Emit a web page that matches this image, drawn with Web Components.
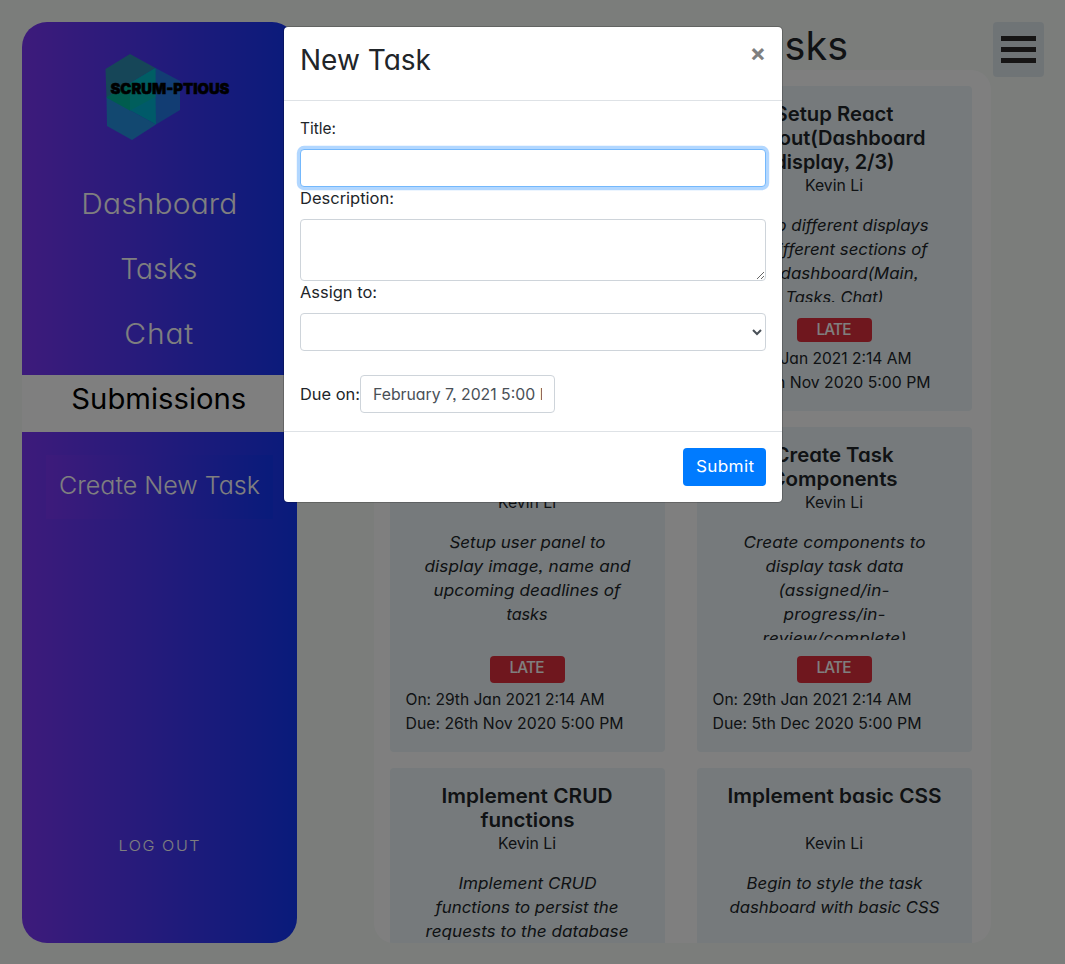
<!DOCTYPE html>
<html lang="en">
<head>
<meta charset="utf-8">
<title>Scrum-ptious</title>
<style>
html,body{height:100%}
body{margin:0;overflow:hidden;background:#f6faf7;color:#212529;font:16px/24px Inter,"Open Sans",sans-serif;font-feature-settings:"cv11","ss03"}
</style>
</head>
<body>
<scrum-app></scrum-app>
<script>
const define=(name,html,init)=>{
  const t=document.createElement('template');t.innerHTML=html;
  customElements.define(name,class extends HTMLElement{
    connectedCallback(){
      if(this.shadowRoot)return;
      this.attachShadow({mode:'open'}).append(t.content.cloneNode(true));
      if(init)init.call(this,this.shadowRoot);
    }
  });
};

/* One line of text set to the width given in its "w" attribute: glyphs widen a little, tracking takes the rest */
define('text-line',`<style>
:host{display:block;white-space:nowrap;flex:none}
span{display:inline-block;transform-origin:0 50%}
</style><span><slot></slot></span>`,function(r){
  const s=r.querySelector('span'),w=+this.getAttribute('w'),n=this.textContent.length;
  if(!w)return;
  const natural=s.getBoundingClientRect().width;
  const k=Math.min(1.07,Math.max(.96,w/natural));
  s.style.letterSpacing=((w/k-natural)/(n-1)).toFixed(3)+'px';
  s.style.transform='translate(var(--nudge,0px),var(--drop,0px)) scaleX('+k.toFixed(4)+')';
  this.style.width=w+'px';
});

define('brand-logo',`<style>:host{display:block;width:140px;height:98px}svg{display:block}</style>
<svg width="140" height="98" viewBox="98 48 140 98">
<path d="M105.500 69 130 54 155.500 68 130 83 106.500 97.500Z" fill="#2c8cb0"/>
<path d="M106.500 97.500 156 124.500 132 140 107 126Z" fill="#2490e0"/>
<path d="M155.500 68 180 81V110L156 124.500Z" fill="#247ae6"/>
<path d="M155.500 68 156 124.500 106.500 97.500Z" fill="#00b4d2"/>
<path d="M155.500 68V96L130 110.500V83Z" fill="#00bcc8"/>
<path d="M106.500 97.500 130 83 156 96.500 130 110.500Z" fill="#00bcb8"/>
<path d="M106.500 97.500 130 83V110.500Z" fill="#00b89c"/>
<text x="110.500" y="93.500" font-family="Inter,sans-serif" font-weight="900" font-size="15" textLength="119" lengthAdjust="spacingAndGlyphs" fill="#000" stroke="#000" stroke-width=".5">SCRUM-PTIOUS</text>
</svg>`);

define('nav-item',`<style>
:host{--nudge:-.7px;display:flex;justify-content:center;height:57px;margin-bottom:8px;font-size:28px;line-height:48px;color:#fff;font-weight:350}
:host([active]){background:#fff;color:#000;font-weight:400}
</style><slot></slot>`);

define('side-bar',`<style>
:host{display:flex;flex-direction:column;width:275px;height:921px;border-radius:25px;background:linear-gradient(90deg,#7b37f7,#1236f6);overflow:hidden;flex:none}
brand-logo{margin:26px 0 34px 76px}
.create{--drop:-1px;display:flex;justify-content:center;align-items:center;width:227px;height:64px;margin:15px 0 0 24px;background:linear-gradient(90deg,#7b37f7,#1236f6);color:#fff;font-size:24px;font-weight:350}
.out{--drop:-1px;--nudge:-.5px;display:flex;justify-content:center;margin-top:auto;margin-bottom:84px;color:#fff;font-size:15px;font-weight:350}
</style>
<brand-logo></brand-logo>
<nav>
<nav-item><text-line w="156">Dashboard</text-line></nav-item>
<nav-item><text-line w="77">Tasks</text-line></nav-item>
<nav-item><text-line w="69">Chat</text-line></nav-item>
<nav-item active><text-line w="175">Submissions</text-line></nav-item>
</nav>
<div class="create"><text-line w="201">Create New Task</text-line></div>
<div class="out"><text-line w="81">LOG OUT</text-line></div>`);

define('task-card',`<style>
:host{--nudge:-.5px;display:flex;flex-direction:column;align-items:center;box-sizing:border-box;width:275px;height:325px;padding:16px 15px;background:#ecf5f8;border-radius:4px}
.title,.desc{display:flex;flex-direction:column;align-items:center}
.title{min-height:48px;font-size:20px;font-weight:600}
.desc{margin-top:15px;height:110px;overflow:hidden;font-style:italic;align-self:stretch;flex:none}
.who{--drop:-1px;--nudge:-1px;height:24px}
:host([tall]) .desc{height:89px}
.badge{--drop:-1px;margin-top:16px;width:75px;height:27px;flex:none;border-radius:4px;background:#df2f3c;color:#fff;display:flex;justify-content:center;font-weight:550}
:host([tall]) .badge{height:24px}
.dates{align-self:stretch;margin:4px 0 0 .5px}
</style>
<div class="title"><slot name="title"></slot></div>
<div class="who"><text-line w="58">Kevin Li</text-line></div>
<div class="desc"><slot name="desc"></slot></div>
<div class="badge"><text-line w="35">LATE</text-line></div>
<div class="dates"><slot name="date"></slot></div>`);

define('menu-button',`<style>
:host{display:flex;flex-direction:column;gap:6px;box-sizing:border-box;width:51px;height:55px;padding:14px 8px;border-radius:4px;background:#dfe9ed;flex:none}
i{display:block;height:5px;background:#2c2a2a}
</style><i></i><i></i><i></i>`);

define('task-board',`<style>
:host{display:block;width:617px;flex:none}
h1{margin:0;height:48px;display:flex;justify-content:flex-end;padding-right:143.500px;font-size:40px;line-height:48px;font-weight:400}
.panel{box-sizing:border-box;height:873px;padding:16px;border-radius:20px;background:#fff;display:grid;grid-template-columns:275px 275px;gap:16px 32px;align-content:start;overflow:hidden}
</style>
<h1><text-line w="110">Tasks</text-line></h1>
<div class="panel">
<task-card></task-card>
<task-card tall>
<text-line slot="title" w="119">Setup React</text-line><text-line slot="title" w="182">Layout(Dashboard</text-line><text-line slot="title" w="120">display, 2/3)</text-line>
<text-line slot="desc" w="188">Setup different displays</text-line><text-line slot="desc" w="186">for different sections of</text-line><text-line slot="desc" w="168">the dashboard(Main,</text-line><text-line slot="desc" w="98">Tasks, Chat)</text-line>
<text-line slot="date" w="199">On: 29th Jan 2021 2:14 AM</text-line><text-line slot="date" w="218">Due: 26th Nov 2020 5:00 PM</text-line>
</task-card>
<task-card>
<text-line slot="desc" w="156">Setup user panel to</text-line><text-line slot="desc" w="206">display image, name and</text-line><text-line slot="desc" w="187">upcoming deadlines of</text-line><text-line slot="desc" w="41">tasks</text-line>
<text-line slot="date" w="199">On: 29th Jan 2021 2:14 AM</text-line><text-line slot="date" w="218">Due: 26th Nov 2020 5:00 PM</text-line>
</task-card>
<task-card>
<text-line slot="title" w="119">Create Task</text-line><text-line slot="title" w="127">Components</text-line>
<text-line slot="desc" w="182">Create components to</text-line><text-line slot="desc" w="138">display task data</text-line><text-line slot="desc" w="111">(assigned/in-</text-line><text-line slot="desc" w="102">progress/in-</text-line><text-line slot="desc" w="144">review/complete)</text-line>
<text-line slot="date" w="199">On: 29th Jan 2021 2:14 AM</text-line><text-line slot="date" w="209">Due: 5th Dec 2020 5:00 PM</text-line>
</task-card>
<task-card>
<text-line slot="title" w="171">Implement CRUD</text-line><text-line slot="title" w="94">functions</text-line>
<text-line slot="desc" w="138">Implement CRUD</text-line><text-line slot="desc" w="183">functions to persist the</text-line><text-line slot="desc" w="203">requests to the database</text-line>
</task-card>
<task-card>
<text-line slot="title" w="214">Implement basic CSS</text-line>
<text-line slot="desc" w="176">Begin to style the task</text-line><text-line slot="desc" w="210">dashboard with basic CSS</text-line>
</task-card>
</div>`);

define('new-task-modal',`<style>
:host{display:block;box-sizing:border-box;width:500px;height:477px;background:#fff;background-clip:padding-box;border:1px solid rgba(0,0,0,.2);border-radius:5px}
header{box-sizing:border-box;height:74px;padding:12px 16px;border-bottom:1px solid #dee2e6;display:flex;justify-content:space-between}
h2{margin:0;font-size:28px;line-height:42px;font-weight:400}
.close{font-size:24px;line-height:28px;font-weight:700;color:#7f7f7f}
main{box-sizing:border-box;height:330px;padding:16px}
label{--drop:-1px;display:block;height:24px}
input,textarea,select{display:block;box-sizing:border-box;width:466px;height:38px;margin:0;padding:6px 12px;border:1px solid #ced4da;border-radius:4px;background:#fff;color:#495057;font:inherit;font-feature-settings:inherit}
.one,textarea,select{margin-top:8px}
.focus{border-color:#74b8fc;box-shadow:0 0 0 3.2px rgba(0,123,255,.3)}
textarea{height:62px;resize:vertical}
select{padding:6px 8px}
.due{display:flex;align-items:center;margin-top:24px}
.date{width:195px;overflow:hidden;box-sizing:border-box;height:38px;border:1px solid #ced4da;border-radius:4px;padding:6px 12px;color:#495057}
.date div{overflow:hidden}
footer{box-sizing:border-box;height:71px;border-top:1px solid #dee2e6;padding:16px;display:flex;justify-content:flex-end}
button{--drop:-1px;--nudge:-1px;box-sizing:border-box;width:83px;height:38px;padding:0;border:0;border-radius:4px;background:#007bff;color:#fff;font:inherit;font-feature-settings:inherit;display:flex;justify-content:center;align-items:center}
</style>
<header><h2><text-line w="131">New Task</text-line></h2><div class="close">×</div></header>
<main>
<label><text-line w="36">Title:</text-line></label><input class="one focus">
<label><text-line w="94">Description:</text-line></label><textarea></textarea>
<label><text-line w="77">Assign to:</text-line></label><select></select>
<div class="due"><text-line w="60">Due on:</text-line><div class="date"><div><text-line w="191">February 7, 2021 5:00 PM</text-line></div></div></div>
</main>
<footer><button><text-line w="58">Submit</text-line></button></footer>`);

define('scrum-app',`<style>
:host{display:block;position:relative;width:1065px;height:964px;overflow:hidden}
.page{display:flex;padding:22px;align-items:flex-start}
task-board{margin-left:77px}
menu-button{margin-left:2px}
.backdrop{position:absolute;inset:0;background:rgba(0,0,0,.5)}
new-task-modal{position:absolute;left:283px;top:26px}
</style>
<div class="page"><side-bar></side-bar><task-board></task-board><menu-button></menu-button></div>
<div class="backdrop"></div>
<new-task-modal></new-task-modal>`);
</script>
</body>
</html>
